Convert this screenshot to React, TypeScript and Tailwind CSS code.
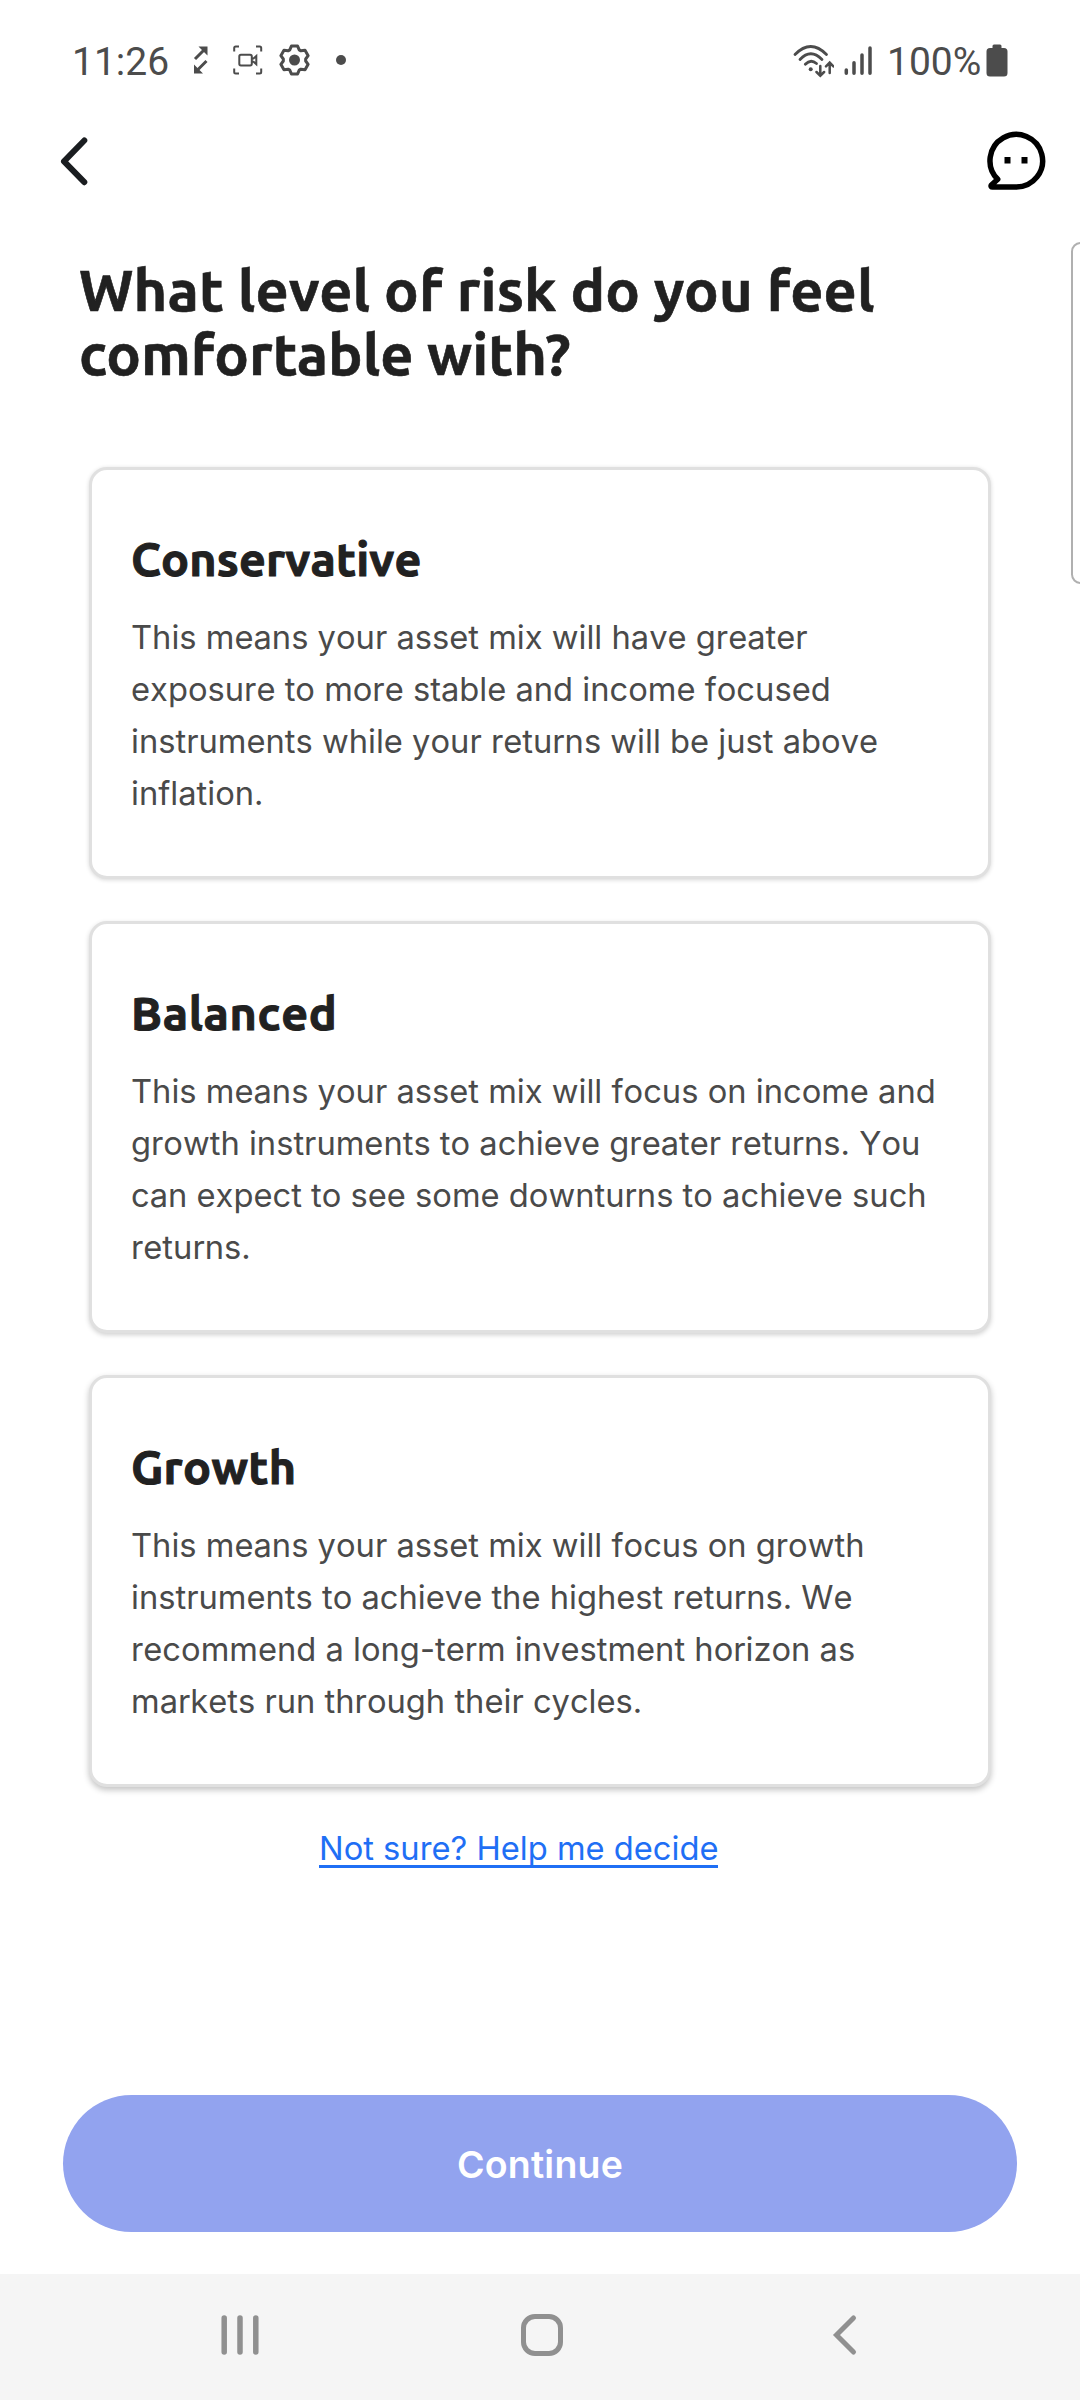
const cards = [
  {
    title: "Conservative",
    tracking: "tracking-[0.15px]",
    lines: [
      "This means your asset mix will have greater",
      "exposure to more stable and income focused",
      "instruments while your returns will be just above",
      "inflation.",
    ],
    shadow: "shadow-[0_1px_4px_rgba(0,0,0,0.16)]",
  },
  {
    title: "Balanced",
    tracking: "tracking-[0.7px]",
    lines: [
      "This means your asset mix will focus on income and",
      "growth instruments to achieve greater returns. You",
      "can expect to see some downturns to achieve such",
      "returns.",
    ],
    shadow: "shadow-[0_2px_5px_rgba(0,0,0,0.19)]",
  },
  {
    title: "Growth",
    tracking: "tracking-[0.3px]",
    lines: [
      "This means your asset mix will focus on growth",
      "instruments to achieve the highest returns. We",
      "recommend a long-term investment horizon as",
      "markets run through their cycles.",
    ],
    shadow: "shadow-[0_3px_6px_rgba(0,0,0,0.24)]",
  },
];

// Outline of a six-toothed gear centred on (16, 16).
const gearPoints = Array.from({ length: 6 }, (_, i) =>
  [
    [-25, 11.2],
    [-12.5, 14.3],
    [12.5, 14.3],
    [25, 11.2],
  ]
    .map(([offset, radius]) => {
      const a = ((i * 60 + offset - 90) * Math.PI) / 180;
      return `${(16 + radius * Math.cos(a)).toFixed(2)},${(16 + radius * Math.sin(a)).toFixed(2)}`;
    })
    .join(" "),
).join(" ");

function StatusBar() {
  return (
    <div className="flex h-[120px] items-center justify-between pr-[72px] pl-[72px] font-['Roboto',sans-serif] text-[39px] text-[#4c4c4c]">
      <div className="flex items-center">
        <span className="w-[97px] pt-[3px] leading-[46px]">11:26</span>
        <svg className="ml-[24px]" width="16" height="30" viewBox="0 0 16 30" fill="currentColor">
          <path d="M5.500 1.500h9v9zM1 19.500v9h9z" />
          <path d="M2 14 11.500 4.500M13.500 16 4 25.500" stroke="currentColor" strokeWidth="3" />
        </svg>
        <svg className="ml-[23px]" width="32" height="32" viewBox="0 0 32 32" fill="none" stroke="currentColor" strokeWidth="2">
          <path d="M2.200 7.500V4q0-1.500 1.500-1.500H7M24 2.500h3.700q1.500 0 1.500 1.500v3.500M29.200 24.500V28q0 1.500-1.500 1.500H24M7 29.500H3.700q-1.500 0-1.500-1.500v-3.500" />
          <rect x="7.300" y="10.800" width="12.500" height="10.600" rx="1.600" />
          <path d="M20 14.500h1.500l2.800-2.500v8.200l-2.800-2.500H20" />
        </svg>
        <svg className="ml-[14px]" width="33" height="32" viewBox="0 0 32 32" fill="none" stroke="currentColor">
          <polygon points={gearPoints} strokeWidth="3" strokeLinejoin="round" />
          <circle cx="16" cy="16" r="5.500" fill="currentColor" stroke="none" />
        </svg>
        <span className="ml-[25px] h-[10px] w-[10px] rounded-full bg-[#4c4c4c]" />
      </div>
      <div className="flex items-center">
        <svg width="44" height="36" viewBox="0 0 44 36" fill="none" stroke="currentColor" strokeWidth="2.800" strokeLinecap="round">
          <path d="M5 12.500Q20.700-3.500 36.500 12.500M10 17.500Q20.700 6 32 17.500M15.300 22.300Q20.700 16.500 26.500 21.500" />
          <circle cx="20.700" cy="27.300" r="2" fill="currentColor" stroke="none" />
          <path d="M30.300 24v9M26.500 30l3.800 3.800 3.800-3.800M39.700 31V21M36 24.300l3.700-3.700 3.700 3.700" strokeWidth="2.500" />
        </svg>
        <svg className="ml-[9px]" width="30" height="36" viewBox="0 0 30 36" stroke="currentColor" strokeWidth="3.500" strokeLinecap="round">
          <path d="M3.300 28v3.300M11 20.800v10.500M19 13v18.300M27 6v25.300" />
        </svg>
        <span className="ml-[14px] w-[96px] pt-[3px] leading-[46px]">100%</span>
        <svg className="ml-[3px]" width="22" height="34" viewBox="0 0 22 34" fill="currentColor">
          <path d="M6.500 5V3q0-1.500 1.500-1.500h6q1.500 0 1.500 1.500v2H18q3.500 0 3.500 3.500V30q0 3.500-3.500 3.500H4Q.5 33.500.5 30V8.500Q.5 5 4 5z" />
        </svg>
      </div>
    </div>
  );
}

function Header() {
  return (
    <header className="flex h-[82px] items-center justify-between pr-[33px] pl-[58px]">
      <svg width="32" height="52" viewBox="0 0 32 52" fill="none" stroke="#1a1d20" strokeWidth="6" strokeLinecap="round" strokeLinejoin="round">
        <path d="M26.300 5.500 6 26.300 26.300 47.200" />
      </svg>
      <svg width="62" height="62" viewBox="0 0 62 62">
        <path
          d="M31 57A26.300 26.300 0 1 0 12.700 49.300L6.200 55.300Q5.500 57 7.500 57Z"
          fill="none"
          stroke="#000"
          strokeWidth="5.500"
          strokeLinejoin="round"
        />
        <path d="M19.500 27h6v6.500h-6zM36.500 27h6v6.500h-6z" />
      </svg>
    </header>
  );
}

export default function App() {
  return (
    <div className="relative flex h-[2400px] w-[1080px] flex-col overflow-hidden bg-white font-['Inter',sans-serif]">
      <StatusBar />
      <Header />
      <h1 className="mt-[56px] pl-[79px] font-['Ubuntu','Noto_Sans',sans-serif] text-[57.75px] leading-[64px] font-bold text-[#212121] [-webkit-text-stroke:0.6px_#212121]">
        <span className="block tracking-[0.13px]">What level of risk do you feel</span>
        <span className="block">comfortable with?</span>
      </h1>
      <main className="mt-[81px] flex flex-col gap-[42px] px-[89px] [font-kerning:none]">
        {cards.map((card) => (
          <section
            key={card.title}
            className={`h-[412px] rounded-[18px] border-[3px] border-[#e0e0e0] bg-white pt-[62px] pl-[39px] ${card.shadow}`}
          >
            <h2
              className={`font-['Ubuntu','Noto_Sans',sans-serif] text-[46.7px] leading-[53px] font-bold text-[#212121] [-webkit-text-stroke:1px_#212121] ${card.tracking}`}
            >
              {card.title}
            </h2>
            <p className="mt-[26px] text-[32.7px] leading-[52px] whitespace-nowrap text-[#4a4a4a]">
              {card.lines.map((line) => (
                <span key={line} className="block">
                  {line}
                </span>
              ))}
            </p>
          </section>
        ))}
      </main>
      <a className="mt-[40px] ml-[319px] h-[41px] w-[399px] border-b-[3px] border-[#1f6ff5] text-[32.7px] leading-[43px] whitespace-nowrap text-[#1f6ff5]">
        Not sure? Help me decide
      </a>
      <button className="mx-[63px] mt-auto flex h-[137px] shrink-0 items-center justify-center rounded-full bg-[#92a3ef] pt-[3px] text-[37.5px] font-semibold tracking-[0.2px] text-white">
        Continue
      </button>
      <nav className="mt-[42px] flex h-[126px] shrink-0 items-center bg-[#f5f5f5] pb-[4px] pl-[220px]">
        <svg width="40" height="42" viewBox="0 0 40 42" stroke="#909090" strokeWidth="5.500" strokeLinecap="round">
          <path d="M4.200 4v34M20 4v34M35.800 4v34" />
        </svg>
        <span className="ml-[261px] h-[42px] w-[42px] rounded-[14px] border-[5px] border-[#909090]" />
        <svg className="ml-[269px]" width="26" height="42" viewBox="0 0 26 42" fill="none" stroke="#909090" strokeWidth="5" strokeLinecap="round">
          <path d="M21.500 4 4.500 21l17 17" />
        </svg>
      </nav>
      <div className="absolute top-[242px] right-[-10px] h-[342px] w-[19px] rounded-[10px] border-2 border-[#b0b0b0]" />
    </div>
  );
}
